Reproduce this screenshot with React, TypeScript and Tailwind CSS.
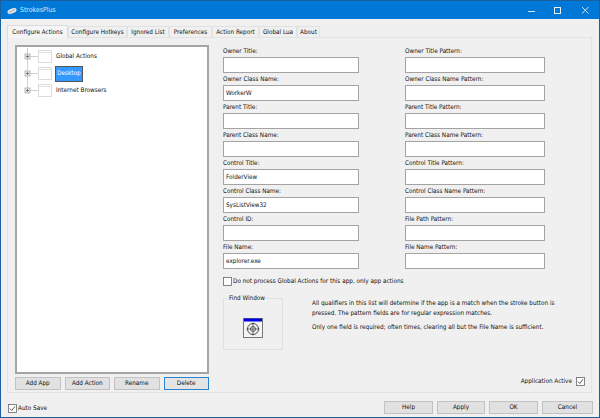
import React from "react";

const left: [string, string][] = [
  ["Owner Title:", ""],
  ["Owner Class Name:", "WorkerW"],
  ["Parent Title:", ""],
  ["Parent Class Name:", ""],
  ["Control Title:", "FolderView"],
  ["Control Class Name:", "SysListView32"],
  ["Control ID:", ""],
  ["File Name:", "explorer.exe"],
];
const right = [
  "Owner Title Pattern:",
  "Owner Class Name Pattern:",
  "Parent Title Pattern:",
  "Parent Class Name Pattern:",
  "Control Title Pattern:",
  "Control Class Name Pattern:",
  "File Path Pattern:",
  "File Name Pattern:",
];
const tabs: [string, string][] = [
  ["Configure Hotkeys", "w-[59px]"],
  ["Ignored List", "w-[42px]"],
  ["Preferences", "w-[43px]"],
  ["Action Report", "w-[47px]"],
  ["Global Lua", "w-[38px]"],
  ["About", "w-[23px]"],
];

function Field({ label, value }: { label: string; value: string }) {
  return (
    <div className="flex h-[28px] flex-col">
      <div className="flex h-[12px] items-center text-[6.35px] leading-none whitespace-nowrap">{label}</div>
      <div className="flex h-[16px] w-full items-center border border-[#a3a3a3] bg-white px-[2px] text-[6.35px] leading-none">{value}</div>
    </div>
  );
}

function Btn({ label, w, focused }: { label: string; w: string; focused?: boolean }) {
  return (
    <div className={`flex h-[13px] items-center justify-center text-[6.35px] leading-none ${w} ${focused ? "border border-[#2a82d0] bg-[#e4e4e4]" : "border border-[#c2c2c2] bg-[#e1e1e1]"}`}>
      {label}
    </div>
  );
}

function Check({ on }: { on?: boolean }) {
  return (
    <svg width="9" height="9" viewBox="0 0 9 9" className="shrink-0">
      <rect x="0.5" y="0.5" width="8" height="8" fill="#fff" stroke="#666" strokeWidth="0.8" />
      {on && <path d="M2 4.5 L3.8 6.5 L7 2.3" fill="none" stroke="#333" strokeWidth="0.8" />}
    </svg>
  );
}

function TreeRow({ label, selected, last }: { label: string; selected?: boolean; last?: boolean }) {
  return (
    <div className="relative flex h-[17px] items-center">
      <svg width="38" height="17" viewBox="0 0 38 17" className="shrink-0">
        <path d={last ? "M10.5 0 V8.5 H21" : "M10.5 0 V17 M10.5 8.5 H21"} stroke="#d0d0d0" strokeWidth="1" fill="none" />
        <rect x="8" y="6" width="5" height="5" fill="#e8e8e8" stroke="#a0a0a0" strokeWidth="0.7" />
        <path d="M9 8.5 H12 M10.5 7 V10" stroke="#444" strokeWidth="0.6" />
        <rect x="21.5" y="2.5" width="13" height="12" fill="#fff" stroke="#dcdcdc" />
        <path d="M22 4.5 H34" stroke="#e2e2e2" />
      </svg>
      <span className={`flex h-[16px] items-center px-[1px] text-[6.35px] leading-none ${selected ? "border border-[#555] bg-[#3399ff] text-white" : ""}`}>{label}</span>
    </div>
  );
}

export default function App() {
  return (
    <div className="flex h-[418px] w-[600px] flex-col overflow-hidden border border-[#1a5f9e] bg-[#f0f0f0] font-['DejaVu_Sans_Condensed','Liberation_Sans',sans-serif] text-[#111]">
      {/* Title bar */}
      <div className="flex h-[18px] shrink-0 items-center bg-[#0078d7] pt-[1px] pl-[6px] text-white">
        <svg width="10" height="8" viewBox="0 0 10 8" className="shrink-0">
          <ellipse cx="5" cy="4" rx="4.8" ry="2.4" transform="rotate(-22 5 4)" fill="#e6e6e6" />
          <path d="M2 5.5 L8 2.5" stroke="#8a8a8a" strokeWidth="0.7" />
        </svg>
        <span className="ml-[3px] text-[6.9px] leading-none text-[#d9ecfb]">StrokesPlus</span>
        <div className="ml-auto flex items-center">
          <svg width="10" height="10" viewBox="0 0 10 10" className="mr-[15px]"><path d="M0 5.5 H7" stroke="#cfe6f8" strokeWidth="1" /></svg>
          <svg width="10" height="10" viewBox="0 0 10 10" className="mr-[18px]"><rect x="1.5" y="1.5" width="6" height="6" fill="none" stroke="#e6f2fb" strokeWidth="1" /></svg>
          <svg width="10" height="10" viewBox="0 0 10 10" className="mr-[8px]"><path d="M1 1 L7.5 7.5 M7.5 1 L1 7.5" stroke="#e6f2fb" strokeWidth="0.9" /></svg>
        </div>
      </div>

      {/* Tabs */}
      <div className="flex h-[18px] shrink-0 items-end pl-[6px]">
        <div className="z-10 mb-[-1px] flex h-[13px] w-[61px] items-center justify-center border border-b-0 border-[#dcdcdc] bg-[#f5f5f5] text-[6.35px] leading-none whitespace-nowrap">Configure Actions</div>
        {tabs.map(([t, w]) => (
          <div key={t} className={`flex h-[11px] items-center justify-center border border-b-0 border-[#e2e2e2] bg-[#f0f0f0] text-[6.35px] leading-none whitespace-nowrap ${w}`}>{t}</div>
        ))}
      </div>

      {/* Panel */}
      <div className="mr-[7px] ml-[6px] flex h-[356px] shrink-0 flex-col border border-[#e3e3e3] pt-[7px] pr-[6px] pb-[3px] pl-[7px]">
        <div className="flex flex-1 gap-[14px]">
          <div className="flex w-[194px] shrink-0 flex-col gap-[3px]">
            <div className="flex h-[329px] flex-col border-2 border-[#a6a6a6] bg-white pt-[1px]">
              <TreeRow label="Global Actions" />
              <TreeRow label="Desktop" selected />
              <TreeRow label="Internet Browsers" last />
            </div>
            <div className="flex gap-[4px]">
              <Btn label="Add App" w="w-[54px]" />
              <Btn label="Add Action" w="w-[54px]" />
              <Btn label="Rename" w="w-[54px]" />
              <Btn label="Delete" w="w-[54px]" focused />
            </div>
          </div>

          <div className="flex min-w-0 flex-1 flex-col">
            <div className="flex gap-[46px]">
              <div className="flex w-[136px] flex-col">
                {left.map(([l, v]) => <Field key={l} label={l} value={v} />)}
              </div>
              <div className="flex w-[140px] flex-col">
                {right.map((l) => <Field key={l} label={l} value="" />)}
              </div>
            </div>
            <div className="mt-[8px] flex items-center text-[6.35px] leading-none whitespace-nowrap">
              <Check />
              <span className="ml-[1px]">Do not process Global Actions for this app, only app actions</span>
            </div>
            <div className="mt-[12px] flex">
              <div className="relative flex h-[52px] w-[60px] shrink-0 items-center justify-center border border-[#e0e0e0]">
                <span className="absolute top-[-4px] left-[4px] bg-[#f0f0f0] px-[1px] text-[6.35px] leading-none whitespace-nowrap">Find Window</span>
                <svg width="20" height="20" viewBox="0 0 20 20" className="mt-[7px]">
                  <rect x="0.5" y="0.5" width="19" height="19" fill="#f4f4f4" stroke="#777" />
                  <rect x="1" y="0.5" width="18" height="3" fill="#0000e0" />
                  <circle cx="10" cy="11" r="5.5" fill="none" stroke="#222" strokeWidth="0.8" />
                  <circle cx="10" cy="11" r="2.5" fill="none" stroke="#222" strokeWidth="0.7" />
                  <path d="M10 4.5 V17.5 M3.5 11 H16.5" stroke="#222" strokeWidth="0.6" />
                </svg>
              </div>
              <div className="ml-[29px] text-[6.35px] leading-[9.5px]">
                <p className="whitespace-nowrap">All qualifiers in this list will determine if the app is a match when the stroke button is</p>
                <p className="whitespace-nowrap">pressed. The pattern fields are for regular expression matches.</p>
                <p className="mt-[5px] whitespace-nowrap">Only one field is required; often times, clearing all but the File Name is sufficient.</p>
              </div>
            </div>
            <div className="mt-auto mb-[4px] flex items-center justify-end gap-[4px] text-[6.35px] leading-none">
              <span>Application Active</span>
              <Check on />
            </div>
          </div>
        </div>
      </div>

      {/* Footer */}
      <div className="flex flex-1 items-center pt-[4px] pr-[6px] pl-[7px]">
        <div className="mt-[3px] flex items-center">
          <Check on />
          <span className="ml-[1px] text-[6.35px] leading-none">Auto Save</span>
        </div>
        <div className="ml-auto flex gap-[4px]">
          <Btn label="Help" w="w-[49px]" />
          <Btn label="Apply" w="w-[48px]" />
          <Btn label="OK" w="w-[49px]" />
          <Btn label="Cancel" w="w-[51px]" />
        </div>
      </div>
    </div>
  );
}
